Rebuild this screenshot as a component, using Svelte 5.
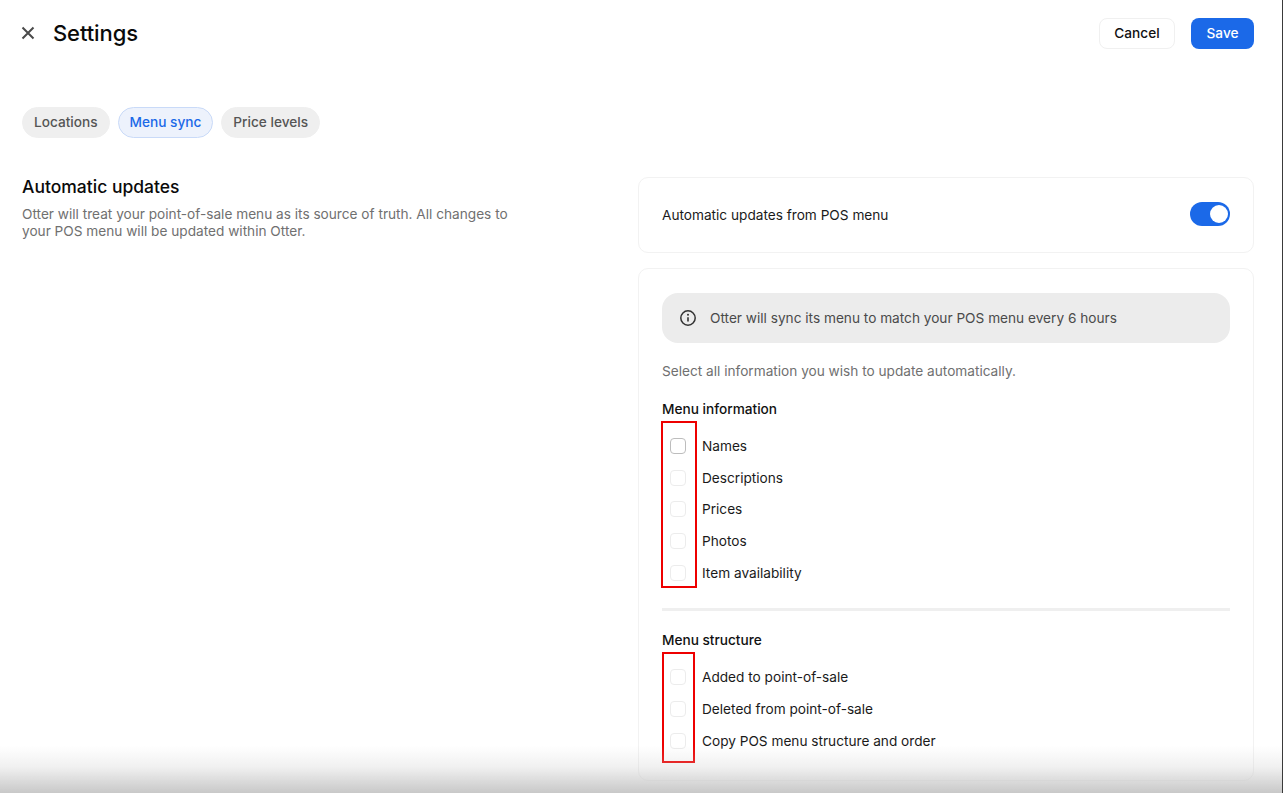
<script>
	const tabs = [
		{ label: 'Locations', active: false },
		{ label: 'Menu sync', active: true },
		{ label: 'Price levels', active: false }
	];
	const menuInfo = ['Names', 'Descriptions', 'Prices', 'Photos', 'Item availability'];
	const menuStructure = ['Added to point-of-sale', 'Deleted from point-of-sale', 'Copy POS menu structure and order'];
</script>

<div class="page">
	<header class="topbar">
		<div class="title-wrap">
			<button class="close" aria-label="Close">
				<svg width="14" height="14" viewBox="0 0 14 14" fill="none">
					<path d="M1.5 1.5L12.5 12.5M12.5 1.5L1.5 12.5" stroke="#4a4a4a" stroke-width="2" />
				</svg>
			</button>
			<h1>Settings</h1>
		</div>
		<div class="actions">
			<button class="btn cancel">Cancel</button>
			<button class="btn save">Save</button>
		</div>
	</header>

	<nav class="tabs">
		{#each tabs as tab}
			<button class="tab" class:active={tab.active}>{tab.label}</button>
		{/each}
	</nav>

	<section class="content">
		<div class="intro">
			<h2>Automatic updates</h2>
			<p>Otter will treat your point-of-sale menu as its source of truth. All changes to your POS menu will be updated within Otter.</p>
		</div>
		<div class="cards">
			<div class="card toggle-card">
				<span>Automatic updates from POS menu</span>
				<span class="toggle"><span class="knob"></span></span>
			</div>
			<div class="card options">
				<div class="info">
					<svg width="18" height="18" viewBox="0 0 18 18" fill="none">
						<circle cx="9" cy="9" r="7.2" stroke="#333" stroke-width="1.5" />
						<path d="M9 8.2V12.6" stroke="#333" stroke-width="1.6" />
						<circle cx="9" cy="5.7" r="1" fill="#333" />
					</svg>
					<span>Otter will sync its menu to match your POS menu every 6 hours</span>
				</div>
				<p class="hint">Select all information you wish to update automatically.</p>

				<h3>Menu information</h3>
				<ul class="checks">
					<li class="mark mark-info"></li>
					{#each menuInfo as item, i}
						<li><span class="box" class:hover={i === 0}></span>{item}</li>
					{/each}
				</ul>

				<hr />

				<h3>Menu structure</h3>
				<ul class="checks">
					<li class="mark mark-structure"></li>
					{#each menuStructure as item}
						<li><span class="box"></span>{item}</li>
					{/each}
				</ul>
			</div>
		</div>
	</section>
	<div class="fade"></div>
	<div class="edge"></div>
</div>

<style>
	:global(body) {
		margin: 0;
		background: #fff;
		overflow: hidden;
	}

	.page {
		height: 793px;
		box-sizing: border-box;
		padding: 17px 29px 0 22px;
		font-family: Inter, "Liberation Sans", sans-serif;
		font-size: 13.65px;
		color: #1a1a1a;
		overflow: hidden;
	}

	.topbar {
		display: flex;
		justify-content: space-between;
		align-items: center;
		height: 32px;
	}

	.title-wrap {
		display: flex;
		align-items: center;
		gap: 18px;
	}

	.close {
		display: flex;
		padding: 0;
		margin-left: -1px;
		border: none;
		background: none;
	}

	h1 {
		margin: 0;
		font-size: 22px;
		font-weight: 500;
		letter-spacing: -0.1px;
		color: #0a0a0a;
	}

	.actions {
		display: flex;
		gap: 16px;
	}

	.btn {
		height: 31px;
		border-radius: 8px;
		font: 500 13.65px Inter, "Liberation Sans", sans-serif;
	}

	.cancel {
		width: 76px;
		background: #fff;
		border: 1px solid #f0f0f0;
		color: #111;
	}

	.save {
		width: 63px;
		background: #1b69e8;
		border: none;
		color: #fff;
	}

	.tabs {
		display: flex;
		gap: 8px;
		margin-top: 58px;
	}

	.tab {
		height: 31px;
		padding: 0 11px 1px;
		border: 1px solid #efefef;
		border-radius: 16px;
		background: #efefef;
		color: #555;
		font: 500 13.65px Inter, "Liberation Sans", sans-serif;
	}

	.tab.active {
		background: #edf2fc;
		border-color: #c9daf8;
		color: #1b69e8;
	}

	.content {
		display: flex;
		justify-content: space-between;
		margin-top: 38px;
	}

	.intro {
		width: 500px;
	}

	h2 {
		margin: 0 0 8px;
		font-size: 17.5px;
		line-height: 22px;
		font-weight: 500;
		color: #0a0a0a;
	}

	.intro p {
		margin: 0;
		line-height: 17px;
		color: #707070;
	}

	.cards {
		width: 616px;
		display: flex;
		flex-direction: column;
		gap: 15px;
		margin-top: 1px;
	}

	.card {
		box-sizing: border-box;
		border: 1px solid #f2f2f2;
		border-radius: 10px;
		padding: 0 23px;
	}

	.toggle-card {
		height: 76px;
		display: flex;
		justify-content: space-between;
		align-items: center;
	}

	.toggle {
		display: flex;
		justify-content: flex-end;
		align-items: center;
		width: 40px;
		height: 24px;
		box-sizing: border-box;
		padding: 2px;
		margin-top: -3px;
		border-radius: 12px;
		background: #1b69e8;
	}

	.knob {
		width: 18px;
		height: 18px;
		border-radius: 50%;
		background: #fff;
	}

	.options {
		height: 513px;
		padding-top: 24px;
	}

	.info {
		display: flex;
		align-items: center;
		gap: 13px;
		height: 50px;
		padding-left: 17px;
		border-radius: 16px;
		background: #ececec;
		color: #4a4a4a;
	}

	.hint {
		margin: 19px 0 0;
		line-height: 18px;
		color: #707070;
	}

	h3 {
		margin: 20px 0 0;
		font-size: 13.65px;
		line-height: 18px;
		font-weight: 500;
		color: #111;
	}

	.checks {
		position: relative;
		list-style: none;
		margin: 12px 0 0;
		padding: 0;
	}

	.checks li {
		display: flex;
		align-items: center;
		height: 31.7px;
	}

	.box {
		box-sizing: border-box;
		width: 16px;
		height: 16px;
		margin: 0 16px 0 8px;
		border: 1px solid #ececec;
		border-radius: 4px;
		background: #fff;
	}

	.box.hover {
		border-color: #bdbdbd;
	}

	/* red review marks drawn over the screenshot */
	.checks .mark {
		position: absolute;
		box-sizing: border-box;
		border: 2px solid #ee0000;
		pointer-events: none;
	}

	.checks .mark-info {
		left: -1px;
		top: -9px;
		width: 36px;
		height: 167px;
	}

	.checks .mark-structure {
		left: 0;
		top: -9px;
		width: 33px;
		height: 111px;
	}

	hr {
		height: 3px;
		margin: 20px 0 0;
		border: none;
		background: #efefef;
	}

	.fade {
		position: fixed;
		left: 0;
		right: 0;
		bottom: 0;
		height: 48px;
		background: linear-gradient(to bottom, rgba(200, 200, 200, 0), rgba(200, 200, 200, 0.25) 45%, rgba(200, 200, 200, 1));
		pointer-events: none;
	}

	.edge {
		position: fixed;
		top: 0;
		right: 0;
		bottom: 0;
		width: 1px;
		background: #3a3a3a;
	}
</style>
